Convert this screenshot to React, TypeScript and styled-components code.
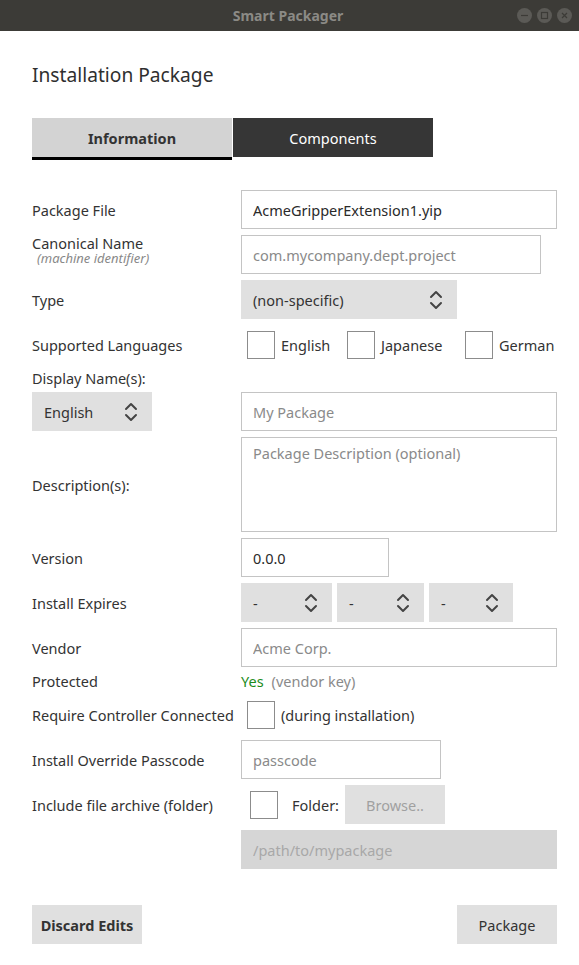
import React from "react";
import styled, { createGlobalStyle } from "styled-components";

const GlobalStyle = createGlobalStyle`
  html, body { margin: 0; padding: 0; background: #ffffff; }
  body { font-family: "Noto Sans", "Open Sans", sans-serif; font-size: 14.5px; line-height: 16px; color: #333333; }
  * { box-sizing: border-box; }
`;

const Window = styled.div`
  width: 579px;
  height: 965px;
  background: #ffffff;
  display: flex;
  flex-direction: column;
`;

const TitleBar = styled.div`
  height: 31px;
  background: #3c3b37;
  display: grid;
  grid-template-columns: 1fr auto 1fr;
  align-items: center;
  padding: 0 7px 0 0;
`;

const Title = styled.div`
  grid-column: 2;
  color: #8b8a85;
  font-weight: 700;
  font-size: 14px;
  padding-left: 4px;
`;

const Controls = styled.div`
  grid-column: 3;
  justify-self: end;
  display: flex;
  gap: 5px;
`;

const CtrlButton = styled.div`
  width: 15px;
  height: 15px;
  border-radius: 50%;
  background: #5b5a56;
  display: flex;
  align-items: center;
  justify-content: center;
`;

const Content = styled.div`
  padding: 30px 22px 0 32px;
  display: flex;
  flex-direction: column;
`;

const Heading = styled.h1`
  margin: 0;
  font-size: 19.2px;
  font-weight: 400;
  color: #2f2f2f;
  line-height: 27px;
`;

const Tabs = styled.div`
  display: flex;
  align-items: flex-start;
  margin-top: 30px;
`;

const Tab = styled.div<{ $active?: boolean }>`
  width: 200px;
  height: ${(p) => (p.$active ? "42px" : "39px")};
  margin-right: ${(p) => (p.$active ? "1px" : "0")};
  display: flex;
  align-items: center;
  justify-content: center;
  background: ${(p) => (p.$active ? "#d3d3d3" : "#363636")};
  border-bottom: ${(p) => (p.$active ? "3px solid #000000" : "none")};
  color: ${(p) => (p.$active ? "#333333" : "#ffffff")};
  font-weight: ${(p) => (p.$active ? 700 : 400)};
  font-size: 14.5px;
`;

const Form = styled.div`
  margin-top: 30px;
  display: flex;
  flex-direction: column;
  gap: 6px;
`;

const Row = styled.div<{ $h?: number }>`
  display: grid;
  grid-template-columns: 209px 1fr;
  align-items: center;
  min-height: ${(p) => p.$h ?? 39}px;
`;

const Label = styled.div`
  color: #333333;
  white-space: nowrap;
`;

const LabelStack = styled.div`
  align-self: start;
  display: flex;
  flex-direction: column;
  line-height: 16px;
`;

const SubLabel = styled.span`
  font-style: italic;
  font-size: 13px;
  line-height: 15px;
  color: #888888;
  padding-left: 5px;
`;

const TextBox = styled.input<{ $w?: number }>`
  width: ${(p) => (p.$w ? `${p.$w}px` : "100%")};
  height: 39px;
  border: 1px solid #c4c4c4;
  background: #ffffff;
  padding: 0 11px;
  font: inherit;
  color: #2a2a2a;
  outline: none;
  &::placeholder { color: #8a8a8a; }
  &:disabled { background: #d6d6d6; border-color: #d6d6d6; }
  &:disabled::placeholder { color: #a8a8a8; }
`;

const TextArea = styled.textarea`
  width: 100%;
  height: 95px;
  border: 1px solid #c4c4c4;
  padding: 7px 11px;
  font: inherit;
  resize: none;
  outline: none;
  display: block;
  &::placeholder { color: #8a8a8a; }
`;

const SelectBox = styled.div<{ $w: number }>`
  width: ${(p) => p.$w}px;
  height: 39px;
  background: #e0e0e0;
  display: flex;
  align-items: center;
  justify-content: space-between;
  padding: 0 14px 0 12px;
  color: #333333;
`;

const Inline = styled.div<{ $gap?: number; $pl?: number }>`
  display: flex;
  align-items: center;
  gap: ${(p) => p.$gap ?? 6}px;
  padding-left: ${(p) => p.$pl ?? 0}px;
`;

const Check = styled.span`
  width: 28px;
  height: 28px;
  border: 1px solid #8c8c8c;
  background: #ffffff;
  display: inline-block;
  flex: none;
`;

const Option = styled.span<{ $w?: number }>`
  display: inline-flex;
  align-items: center;
  gap: 6px;
  width: ${(p) => (p.$w ? `${p.$w}px` : "auto")};
`;

const FolderLabel = styled.span`
  margin-left: 8px;
`;

const Yes = styled.span`
  color: #1c8c1c;
`;

const Muted = styled.span`
  color: #8a8a8a;
`;

const GrayButton = styled.div<{ $w: number; $bold?: boolean; $muted?: boolean }>`
  width: ${(p) => p.$w}px;
  height: 39px;
  background: #e0e0e0;
  display: flex;
  align-items: center;
  justify-content: center;
  font-weight: ${(p) => (p.$bold ? 700 : 400)};
  color: ${(p) => (p.$muted ? "#a0a0a0" : "#333333")};
`;

const Footer = styled.div`
  margin-top: 36px;
  display: flex;
  justify-content: space-between;
`;

const Chevrons = () => (
  <svg width="14" height="22" viewBox="0 0 14 22" fill="none">
    <path d="M2 8 L7 3 L12 8" stroke="#444" strokeWidth="2" strokeLinecap="round" strokeLinejoin="round" />
    <path d="M2 14 L7 19 L12 14" stroke="#444" strokeWidth="2" strokeLinecap="round" strokeLinejoin="round" />
  </svg>
);

const Select = ({ w, children }: { w: number; children: React.ReactNode }) => (
  <SelectBox $w={w}>
    <span>{children}</span>
    <Chevrons />
  </SelectBox>
);

export default function App() {
  return (
    <Window>
      <GlobalStyle />
      <TitleBar>
        <Title>Smart Packager</Title>
        <Controls>
          <CtrlButton>
            <svg width="9" height="9" viewBox="0 0 9 9"><path d="M1 4.5 H8" stroke="#3c3b37" strokeWidth="1.2" /></svg>
          </CtrlButton>
          <CtrlButton>
            <svg width="9" height="9" viewBox="0 0 9 9"><rect x="1.5" y="1.5" width="6" height="6" fill="none" stroke="#3c3b37" strokeWidth="1.2" /></svg>
          </CtrlButton>
          <CtrlButton>
            <svg width="9" height="9" viewBox="0 0 9 9"><path d="M2 2 L7 7 M7 2 L2 7" stroke="#3c3b37" strokeWidth="1.2" /></svg>
          </CtrlButton>
        </Controls>
      </TitleBar>
      <Content>
        <Heading>Installation Package</Heading>
        <Tabs>
          <Tab $active>Information</Tab>
          <Tab>Components</Tab>
        </Tabs>
        <Form>
          <Row>
            <Label>Package File</Label>
            <TextBox readOnly value="AcmeGripperExtension1.yip" />
          </Row>
          <Row>
            <LabelStack>
              <span>Canonical Name</span>
              <SubLabel>(machine identifier)</SubLabel>
            </LabelStack>
            <TextBox readOnly $w={300} placeholder="com.mycompany.dept.project" />
          </Row>
          <Row>
            <Label>Type</Label>
            <Select w={216}>(non-specific)</Select>
          </Row>
          <Row>
            <Label>Supported Languages</Label>
            <Inline $gap={0} $pl={6}>
              <Option $w={100}><Check />English</Option>
              <Option $w={118}><Check />Japanese</Option>
              <Option><Check />German</Option>
            </Inline>
          </Row>
          <Row $h={16}>
            <Label>Display Name(s):</Label>
          </Row>
          <Row>
            <Select w={120}>English</Select>
            <TextBox readOnly placeholder="My Package" />
          </Row>
          <Row $h={95}>
            <Label>Description(s):</Label>
            <TextArea readOnly placeholder="Package Description (optional)" />
          </Row>
          <Row>
            <Label>Version</Label>
            <TextBox readOnly $w={148} value="0.0.0" />
          </Row>
          <Row>
            <Label>Install Expires</Label>
            <Inline $gap={5}>
              <Select w={91}>-</Select>
              <Select w={87}>-</Select>
              <Select w={84}>-</Select>
            </Inline>
          </Row>
          <Row>
            <Label>Vendor</Label>
            <TextBox readOnly placeholder="Acme Corp." />
          </Row>
          <Row $h={16}>
            <Label>Protected</Label>
            <Inline $gap={8}>
              <Yes>Yes</Yes>
              <Muted>(vendor key)</Muted>
            </Inline>
          </Row>
          <Row>
            <Label>Require Controller Connected</Label>
            <Inline $gap={6} $pl={6}>
              <Check />
              <span>(during installation)</span>
            </Inline>
          </Row>
          <Row>
            <Label>Install Override Passcode</Label>
            <TextBox readOnly $w={200} placeholder="passcode" />
          </Row>
          <Row>
            <Label>Include file archive (folder)</Label>
            <Inline $gap={6} $pl={9}>
              <Check />
              <FolderLabel>Folder:</FolderLabel>
              <GrayButton $w={100} $muted>Browse..</GrayButton>
            </Inline>
          </Row>
          <Row>
            <span />
            <TextBox disabled placeholder="/path/to/mypackage" />
          </Row>
        </Form>
        <Footer>
          <GrayButton $w={110} $bold>Discard Edits</GrayButton>
          <GrayButton $w={100}>Package</GrayButton>
        </Footer>
      </Content>
    </Window>
  );
}
